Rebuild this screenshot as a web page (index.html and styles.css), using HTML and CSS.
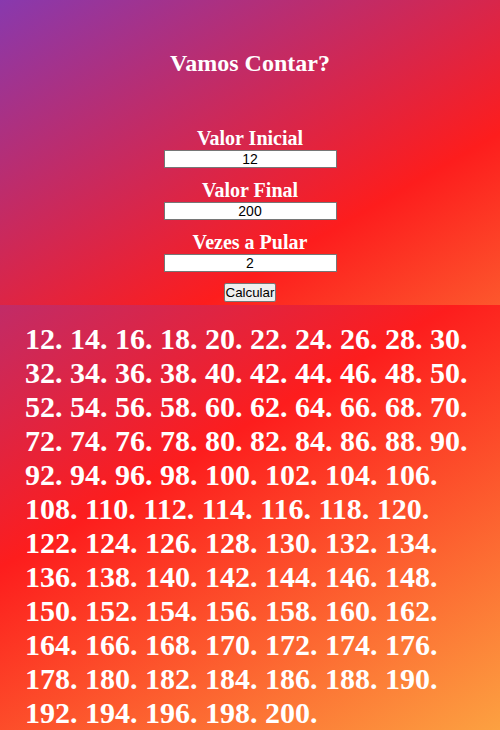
FILE: index.html
```html
<!DOCTYPE html>
<html lang="pt">
<head>
<meta charset="utf-8">
<title>Vamos Contar?</title>
<link rel="stylesheet" href="styles.css">
</head>
<body>
<header class="top">
  <h1 class="title">Vamos Contar?</h1>
  <form class="form">
    <label class="label" for="ini">Valor Inicial</label>
    <input class="field" id="ini" type="text" value="12">
    <label class="label" for="fim">Valor Final</label>
    <input class="field" id="fim" type="text" value="200">
    <label class="label" for="passo">Vezes a Pular</label>
    <input class="field" id="passo" type="text" value="2">
    <button class="btn" type="button">Calcular</button>
  </form>
</header>
<main class="result">12. 14. 16. 18. 20. 22. 24. 26. 28. 30. 32. 34. 36. 38. 40. 42. 44. 46. 48. 50. 52. 54. 56. 58. 60. 62. 64. 66. 68. 70. 72. 74. 76. 78. 80. 82. 84. 86. 88. 90. 92. 94. 96. 98. 100. 102. 104. 106. 108. 110. 112. 114. 116. 118. 120. 122. 124. 126. 128. 130. 132. 134. 136. 138. 140. 142. 144. 146. 148. 150. 152. 154. 156. 158. 160. 162. 164. 166. 168. 170. 172. 174. 176. 178. 180. 182. 184. 186. 188. 190. 192. 194. 196. 198. 200.</main>
</body>
</html>
```

FILE: styles.css
```css
html, body {
  margin: 0;
  padding: 0;
}

body {
  font-family: "Liberation Serif", "Times New Roman", serif;
  color: #fff;
  background: #fd1d1d;
}

.top {
  height: 305px;
  box-sizing: border-box;
  padding-top: 50px;
  background: linear-gradient(150deg, #833ab4 -3%, #fd1d1d 71%, #fcb045 144%);
}

.title {
  margin: 0;
  font-size: 24px;
  font-weight: bold;
  text-align: center;
  line-height: 27px;
}

.form {
  margin-top: 50px;
  display: flex;
  flex-direction: column;
  align-items: center;
}

.label {
  font-size: 20px;
  font-weight: bold;
  line-height: 22px;
  margin-top: 11px;
}

.label:first-child {
  margin-top: 0;
}

.field {
  margin-top: 1px;
  width: 173px;
  height: 18px;
  box-sizing: border-box;
  border: 1px solid #767676;
  border-radius: 0;
  padding: 0 2px;
  background: #fff;
  color: #000;
  text-align: center;
  font-family: "Liberation Sans", Arial, sans-serif;
  font-size: 14px;
}

.btn {
  margin-top: 11px;
  height: 19px;
  box-sizing: border-box;
  padding: 0 1px;
  border: 1px solid #767676;
  border-radius: 2px;
  background: #efefef;
  color: #000;
  font-family: "Liberation Sans", Arial, sans-serif;
  font-size: 13.33px;
}

.result {
  display: block;
  box-sizing: border-box;
  padding: 17px 22px 15px 25px;
  font-size: 30px;
  font-weight: bold;
  line-height: 34px;
  background: linear-gradient(150deg, #833ab4 -37%, #fd1d1d 36%, #fcb045 105%);
}
```
